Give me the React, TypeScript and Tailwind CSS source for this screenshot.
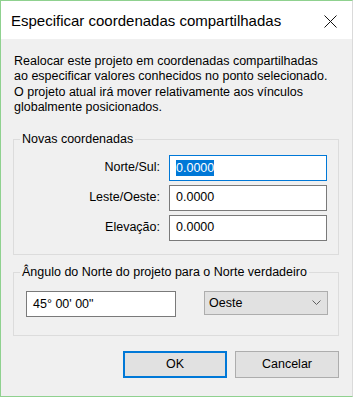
import type React from "react";

const font = { fontFamily: '"Liberation Sans", Arial, sans-serif' };

function Field({ label, value, focused }: { label: string; value: string; focused?: boolean }) {
  return (
    <div className="flex items-center h-[25px]">
      <span className="w-[155px] pr-[9px] text-right">{label}</span>
      <div
        className={
          "flex items-center h-[26px] w-[158px] bg-white pl-[6px] " +
          (focused ? "border border-[#0078d7]" : "border border-[#7a7a7a]")
        }
      >
        {focused ? (
          <span className="bg-[#0078d7] text-white leading-[16px]">{value}</span>
        ) : (
          <span>{value}</span>
        )}
      </div>
    </div>
  );
}

export default function App() {
  return (
    <div
      className="w-[353px] h-[397px] flex flex-col border-t border-l border-b border-t-[#8fd18f] border-l-[#8fd18f] border-b-[#8fd18f] border-r border-r-[#dadada] text-[12.5px] text-black"
      style={font}
    >
      {/* barra del titolo */}
      <div className="h-[38px] bg-white flex items-center justify-between pl-[10px] pr-[15px]">
        <span className="text-[15px] mt-[3px]">Especificar coordenadas compartilhadas</span>
        <svg width="13" height="13" viewBox="0 0 13 13" className="mt-[2px]">
          <path d="M0.5 0.5 L12.5 12.5 M12.5 0.5 L0.5 12.5" stroke="#111" strokeWidth="1" fill="none" />
        </svg>
      </div>

      <div className="flex-1 bg-[#f0f0f0] px-[12px] pt-[15px]">
        <p className="leading-[15.3px] pl-[1px]">
          Realocar este projeto em coordenadas compartilhadas
          <br />
          ao especificar valores conhecidos no ponto selecionado.
          <br />
          O projeto atual irá mover relativamente aos vínculos
          <br />
          globalmente posicionados.
        </p>

        <fieldset className="mt-[17px] border border-[#dcdcdc] w-[326px] h-[123px]">
          <legend className="ml-[6px] px-[2px] leading-[15px]">Novas coordenadas</legend>
          <div className="flex flex-col gap-[5px] mt-[8px]">
            <Field label="Norte/Sul:" value="0.0000" focused />
            <Field label="Leste/Oeste:" value="0.0000" />
            <Field label="Elevação:" value="0.0000" />
          </div>
        </fieldset>

        <fieldset className="mt-[10px] border border-[#dcdcdc] w-[326px] h-[71px] pl-[12px] pr-[10px]">
          <legend className="ml-[-6px] px-[2px] leading-[15px]">
            Ângulo do Norte do projeto para o Norte verdadeiro
          </legend>
          <div className="flex items-start justify-between mt-[11px]">
            <div className="h-[26px] w-[150px] bg-white border border-[#7a7a7a] flex items-center pl-[6px]">
              45° 00' 00"
            </div>
            <div className="h-[24px] w-[124px] bg-[#e1e1e1] border border-[#adadad] flex items-center justify-between pl-[4px] pr-[6px]">
              <span>Oeste</span>
              <svg width="9" height="6" viewBox="0 0 9 6">
                <path d="M0.5 0.5 L4.5 4.5 L8.5 0.5" stroke="#606060" strokeWidth="1" fill="none" />
              </svg>
            </div>
          </div>
        </fieldset>

        <div className="flex justify-end gap-[8px] mt-[15px] w-[326px]">
          <button className="h-[27px] w-[104px] bg-[#e1e1e1] border-2 border-[#0078d7]">OK</button>
          <button className="h-[27px] w-[104px] bg-[#e1e1e1] border border-[#adadad]">Cancelar</button>
        </div>
      </div>
    </div>
  );
}
